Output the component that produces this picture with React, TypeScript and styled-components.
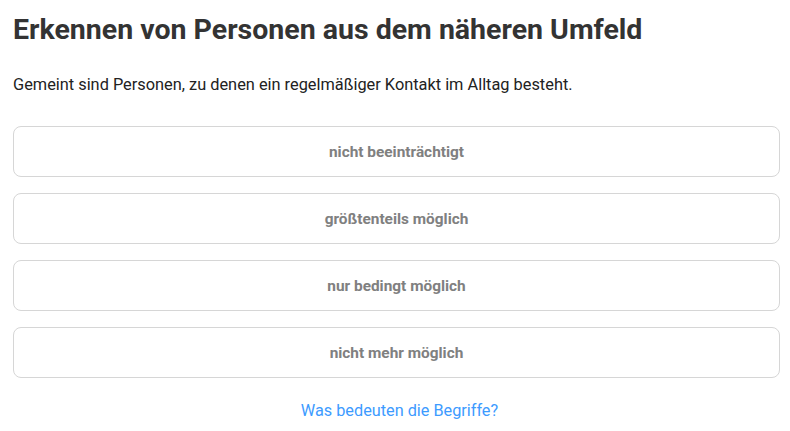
import React from "react";
import styled, { createGlobalStyle } from "styled-components";

const Global = createGlobalStyle`
  html, body { margin: 0; padding: 0; background: #fff; }
  body { font-family: Roboto, "Liberation Sans", Arial, sans-serif; }
`;

const Page = styled.div`
  padding: 12px 10px 0 13px;
  display: flex;
  flex-direction: column;
`;

const Title = styled.h1`
  margin: 0;
  font-size: 28.5px;
  line-height: 36px;
  font-weight: 700;
  color: #333333;
`;

const Lead = styled.p`
  margin: 26px 0 0 0;
  font-size: 16.35px;
  line-height: 22px;
  color: #222222;
`;

const Options = styled.div`
  margin-top: 30px;
  display: flex;
  flex-direction: column;
  gap: 16px;
`;

const Option = styled.button`
  height: 51px;
  width: 100%;
  border: 1px solid #d6d6d6;
  border-radius: 8px;
  background: #fff;
  font-family: Roboto, "Liberation Sans", Arial, sans-serif;
  font-size: 15.4px;
  font-weight: 700;
  color: #808080;
  cursor: pointer;
  padding: 0;
`;

const LinkRow = styled.div`
  margin-top: 22px;
  padding-left: 6px;
  display: flex;
  justify-content: center;
`;

const Link = styled.a`
  font-size: 16.25px;
  line-height: 22px;
  color: #3d9bff;
  text-decoration: none;
  cursor: pointer;
`;

const options = [
  "nicht beeinträchtigt",
  "größtenteils möglich",
  "nur bedingt möglich",
  "nicht mehr möglich",
];

export default function App() {
  return (
    <>
      <Global />
      <Page>
        <Title>Erkennen von Personen aus dem näheren Umfeld</Title>
        <Lead>Gemeint sind Personen, zu denen ein regelmäßiger Kontakt im Alltag besteht.</Lead>
        <Options>
          {options.map((o) => (
            <Option key={o}>{o}</Option>
          ))}
        </Options>
        <LinkRow>
          <Link>Was bedeuten die Begriffe?</Link>
        </LinkRow>
      </Page>
    </>
  );
}
